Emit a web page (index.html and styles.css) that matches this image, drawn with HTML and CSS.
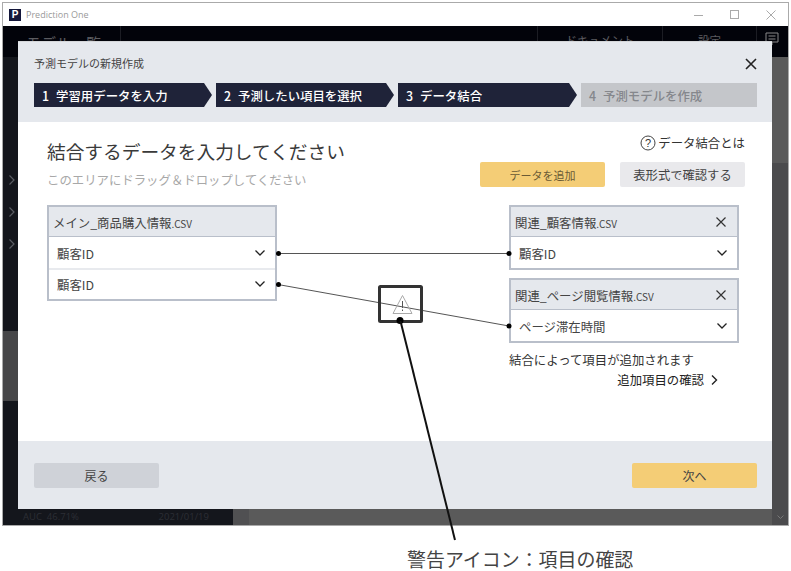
FILE: index.html
```html
<!DOCTYPE html>
<html lang="ja">
<head>
    <meta charset="UTF-8">
    <title>Prediction One</title>
    <link rel="stylesheet" href="styles.css">
</head>
<body>
    <div class="app-window">
        <div class="title-bar">
            <div class="app-logo">P</div>
            <span class="app-name">Prediction One</span>
            <div class="win-controls">
                <svg width="12" height="12" viewBox="0 0 12 12"><path d="M1 6.5H10" stroke="#aaa" fill="none"/></svg>
                <svg width="12" height="12" viewBox="0 0 12 12"><rect x="1.5" y="1.5" width="8" height="8" stroke="#aaa" fill="none"/></svg>
                <svg width="12" height="12" viewBox="0 0 12 12"><path d="M1.5 1.5L10.5 10.5M10.5 1.5L1.5 10.5" stroke="#aaa" fill="none"/></svg>
            </div>
        </div>
        <div class="app-nav">
            <div class="nav-models">モデル一覧</div>
            <div class="nav-spacer"></div>
            <div class="nav-item nav-doc">ドキュメント</div>
            <div class="nav-item nav-settings">設定</div>
            <div class="nav-item nav-feedback">
                <svg width="14" height="14" viewBox="0 0 14 14"><path d="M1 1H13V10H7V13L4 10H1Z M3.5 4H10.5 M3.5 7H10.5" stroke="#888" fill="none"/></svg>
            </div>
        </div>
        <div class="app-body">
            <div class="sidebar">
                <div class="side-top"></div>
                <div class="side-chevrons">
                    <svg width="6" height="10" viewBox="0 0 6 10"><path d="M0.5 0.5L5 5L0.5 9.5" stroke="#5a5c63" stroke-width="1.2" fill="none"/></svg>
                    <svg width="6" height="10" viewBox="0 0 6 10"><path d="M0.5 0.5L5 5L0.5 9.5" stroke="#5a5c63" stroke-width="1.2" fill="none"/></svg>
                    <svg width="6" height="10" viewBox="0 0 6 10"><path d="M0.5 0.5L5 5L0.5 9.5" stroke="#5a5c63" stroke-width="1.2" fill="none"/></svg>
                </div>
                <div class="side-selected"></div>
                <div class="side-bottom">
                    <span>AUC&nbsp; 46.71%</span>
                    <span>2021/01/19</span>
                </div>
            </div>
            <div class="main-area">
                <div class="main-gutter"></div>
                <div class="main-fill"></div>
                <div class="scrollbar">
                    <svg width="7" height="4" viewBox="0 0 7 4"><path d="M0.5 0.5L3.5 3.500L6.500 0.5" stroke="#777" fill="none"/></svg>
                </div>
            </div>
        </div>

        <div class="modal">
            <div class="modal-header">
                <div class="modal-title-row">
                    <span class="modal-title">予測モデルの新規作成</span>
                    <svg class="modal-close" width="12" height="12" viewBox="0 0 12 12"><path d="M1 1L11 11M11 1L1 11" stroke="#222" stroke-width="1.6" fill="none"/></svg>
                </div>
                <div class="steps">
                    <div class="step"><b>1</b>学習用データを入力</div>
                    <div class="step"><b>2</b>予測したい項目を選択</div>
                    <div class="step step-wide"><b>3</b>データ結合</div>
                    <div class="step step-off"><b>4</b>予測モデルを作成</div>
                </div>
            </div>

            <div class="modal-body">
                <div class="intro-row">
                    <div>
                        <h2 class="page-title">結合するデータを入力してください</h2>
                        <p class="page-hint">このエリアにドラッグ＆ドロップしてください</p>
                    </div>
                    <div class="intro-actions">
                        <div class="help-link">
                            <svg width="16" height="16" viewBox="0 0 16 16"><circle cx="8" cy="8" r="7" stroke="#444" fill="none"/><text x="8" y="12" text-anchor="middle" class="help-mark">?</text></svg>
                            データ結合とは
                        </div>
                        <div class="action-btns">
                            <button class="btn btn-yellow btn-add">データを追加</button>
                            <button class="btn btn-light">表形式で確認する</button>
                        </div>
                    </div>
                </div>

                <div class="join-row">
                    <div class="data-card">
                        <div class="card-head"><span>メイン_商品購入情報<span class="file-ext">.CSV</span></span></div>
                        <div class="card-row">顧客ID<svg class="chev" width="10" height="6" viewBox="0 0 10 6"><path d="M0.5 0.5L5 5L9.5 0.5" stroke="#222" stroke-width="1.3" fill="none"/></svg></div>
                        <div class="card-row card-row-split">顧客ID<svg class="chev" width="10" height="6" viewBox="0 0 10 6"><path d="M0.5 0.5L5 5L9.5 0.5" stroke="#222" stroke-width="1.3" fill="none"/></svg></div>
                    </div>
                    <div class="right-col">
                        <div class="data-card">
                            <div class="card-head"><span>関連_顧客情報<span class="file-ext">.CSV</span></span><svg class="card-x" width="10" height="10" viewBox="0 0 10 10"><path d="M0.5 0.5L9.5 9.5M9.5 0.5L0.5 9.5" stroke="#333" stroke-width="1.2" fill="none"/></svg></div>
                            <div class="card-row">顧客ID<svg class="chev" width="10" height="6" viewBox="0 0 10 6"><path d="M0.5 0.5L5 5L9.5 0.5" stroke="#222" stroke-width="1.3" fill="none"/></svg></div>
                        </div>
                        <div class="data-card">
                            <div class="card-head"><span>関連_ページ閲覧情報<span class="file-ext">.CSV</span></span><svg class="card-x" width="10" height="10" viewBox="0 0 10 10"><path d="M0.5 0.5L9.5 9.5M9.5 0.5L0.5 9.5" stroke="#333" stroke-width="1.2" fill="none"/></svg></div>
                            <div class="card-row">ページ滞在時間<svg class="chev" width="10" height="6" viewBox="0 0 10 6"><path d="M0.5 0.5L5 5L9.5 0.5" stroke="#222" stroke-width="1.3" fill="none"/></svg></div>
                        </div>
                        <div class="join-note">結合によって項目が追加されます</div>
                        <div class="join-link">追加項目の確認<svg width="7" height="10" viewBox="0 0 7 10"><path d="M1 0.5L5.5 5L1 9.5" stroke="#222" stroke-width="1.4" fill="none"/></svg></div>
                    </div>
                </div>
            </div>

            <div class="modal-footer">
                <button class="btn btn-back">戻る</button>
                <button class="btn btn-yellow btn-next">次へ</button>
            </div>
        </div>
    </div>

    <!-- connectors and the callout drawn over the screenshot -->
    <svg class="overlay" width="791" height="571" viewBox="0 0 791 571">
        <path d="M278 253.500H509" stroke="#555" fill="none"/>
        <path d="M278 284.500L509 326" stroke="#555" fill="none"/>
        <circle cx="278.500" cy="253.500" r="2.500"/>
        <circle cx="278.500" cy="284.500" r="2.500"/>
        <circle cx="509" cy="253.500" r="2.500"/>
        <circle cx="509" cy="326" r="2.500"/>
        <path d="M402.500 295.500L412 313.500H393Z" stroke="#aaa" fill="none"/>
        <path d="M402.500 301V308M402.500 309.500V311" stroke="#555" fill="none"/>
        <rect x="379.500" y="286.500" width="42" height="35" rx="1" stroke="#333" stroke-width="3" fill="none"/>
        <circle cx="400" cy="320.500" r="3.500"/>
        <path d="M400.500 321L455 540" stroke="#111" stroke-width="2" fill="none"/>
    </svg>
    <div class="callout">警告アイコン：項目の確認</div>
</body>
</html>
```

FILE: styles.css
```css
* {
    box-sizing: border-box;
}
body {
    margin: 0;
    width: 791px;
    height: 571px;
    position: relative;
    overflow: hidden;
    background-color: #fff;
    font-family: "Noto Sans CJK JP", "Noto Sans", sans-serif;
    color: #333;
}
.app-window {
    position: relative;
    margin: 2px 0 0 2px;
    width: 787px;
    height: 524px;
    border: 1px solid #aaa;
    display: flex;
    flex-direction: column;
    overflow: hidden;
}
.title-bar {
    height: 23px;
    flex: none;
    background-color: #fff;
    display: flex;
    align-items: center;
    padding-left: 6px;
}
.app-logo {
    width: 12px;
    height: 12px;
    background-color: #13163a;
    color: #fff;
    font-family: "Liberation Sans", sans-serif;
    font-size: 10px;
    font-weight: bold;
    line-height: 12px;
    text-align: center;
}
.app-name {
    margin-left: 5px;
    font-family: "Open Sans", sans-serif;
    font-size: 9px;
    color: #9a9a9a;
}
.win-controls {
    margin-left: auto;
    margin-right: 11px;
    display: flex;
    gap: 24px;
}
.app-nav {
    height: 31px;
    flex: none;
    background-color: #02030a;
    display: flex;
    padding-right: 1px;
    color: #5c5c60;
    font-size: 11.500px;
}
.nav-models {
    width: 118px;
    padding: 6px 0 0 23px;
    border-right: 1px solid #1c1d24;
    font-size: 15px;
}
.nav-spacer {
    flex: 1;
}
.nav-item {
    text-align: center;
    padding-top: 6px;
    border-left: 1px solid #1c1d24;
}
.nav-doc {
    width: 125px;
}
.nav-settings {
    width: 94px;
}
.nav-feedback {
    width: 31px;
}
.app-body {
    flex: 1;
    display: flex;
    min-height: 0;
}
.sidebar {
    width: 230px;
    flex: none;
    background-color: #14161c;
    display: flex;
    flex-direction: column;
    color: #2c2e35;
    font-size: 9.500px;
}
.side-top {
    height: 118px;
    flex: none;
}
.side-chevrons {
    height: 156px;
    flex: none;
    display: flex;
    flex-direction: column;
    gap: 22px;
    padding-left: 6px;
}
.side-selected {
    height: 70px;
    flex: none;
    background-color: #464648;
}
.side-bottom {
    margin-top: auto;
    height: 20px;
    display: flex;
    justify-content: space-between;
    padding: 5px 24px 0 20px;
    font-family: "Open Sans", sans-serif;
}
.main-area {
    flex: 1;
    display: flex;
    background-color: #5a5a5a;
}
.main-gutter {
    width: 16px;
    background-color: #505052;
}
.main-fill {
    flex: 1;
}
.scrollbar {
    width: 16px;
    margin-top: 106px;
    background-color: #4b4b4d;
    display: flex;
    align-items: flex-end;
    justify-content: center;
    padding-bottom: 6px;
}
.modal {
    position: absolute;
    left: 15px;
    top: 38px;
    width: 754px;
    height: 468px;
    background-color: #fff;
    border-top: 1px solid #d5d7da;
    display: flex;
    flex-direction: column;
}
.modal-header {
    height: 80px;
    flex: none;
    background-color: #e5e8ed;
    padding: 13px 15px 0 16px;
}
.modal-title-row {
    height: 16px;
    display: flex;
    justify-content: space-between;
    align-items: center;
    font-size: 11px;
    color: #444;
}
.modal-close {
    margin-top: 2px;
}
.steps {
    display: flex;
    gap: 4px;
    margin-top: 12px;
}
.step {
    width: 178px;
    height: 24px;
    padding-left: 8px;
    background-color: #1f2339;
    color: #fff;
    font-size: 12.400px;
    font-weight: 500;
    line-height: 26px;
    white-space: nowrap;
    clip-path: polygon(0 0, calc(100% - 8px) 0, 100% 50%, calc(100% - 8px) 100%, 0 100%);
}
.step b {
    font-weight: 500;
    margin-right: 7px;
}
.step-wide {
    width: 179px;
}
.step-off {
    width: 176px;
    background-color: #c4c6ca;
    color: #85878c;
    clip-path: none;
}
.modal-body {
    flex: 1;
    padding: 0 33px 0 29px;
}
.intro-row {
    display: flex;
    justify-content: space-between;
    height: 83px;
}
.page-title {
    margin: 16px 0 0;
    font-size: 18.700px;
    font-weight: 400;
    line-height: 26px;
    color: #3a3a3a;
}
.page-hint {
    margin: 7px 0 0;
    font-size: 12.400px;
    line-height: 18px;
    color: #a8a8a8;
}
.intro-actions {
    display: flex;
    flex-direction: column;
    align-items: flex-end;
    padding-top: 12px;
    margin-right: -6px;
}
.help-link {
    display: flex;
    align-items: center;
    gap: 2px;
    height: 17px;
    font-size: 12.400px;
    color: #333;
}
.help-mark {
    font-family: "Liberation Sans", sans-serif;
    font-size: 11px;
    fill: #333;
}
.action-btns {
    display: flex;
    gap: 15px;
    margin-top: 11px;
}
.btn {
    border: none;
    border-radius: 2px;
    font-family: inherit;
    color: #444;
    padding: 0;
}
.btn-yellow {
    background-color: #f4cd76;
}
.btn-add {
    width: 125px;
    height: 25px;
    font-size: 11px;
    color: #6a5a35;
}
.btn-light {
    width: 125px;
    height: 25px;
    background-color: #e9e9ec;
    font-size: 12.300px;
}
.join-row {
    display: flex;
    justify-content: space-between;
    align-items: flex-start;
}
.right-col {
    display: flex;
    flex-direction: column;
    gap: 8px;
    width: 230px;
}
.data-card {
    width: 230px;
    border: 2px solid #b9bfca;
    background-color: #fff;
    font-size: 12.400px;
}
.card-head {
    height: 30px;
    background-color: #e5e8ed;
    border-bottom: 1px solid #b9bfca;
    padding: 2px 10px 0 4px;
    display: flex;
    align-items: center;
    justify-content: space-between;
    color: #444;
}
.file-ext {
    font-size: 10px;
}
.card-x {
    margin: -2px 1px 0 0;
}
.card-row {
    height: 31px;
    padding: 2px 10px 0 8px;
    display: flex;
    align-items: center;
    justify-content: space-between;
    color: #444;
}
.chev {
    margin-top: -2px;
}
.card-row-split {
    padding-top: 0;
    border-top: 2px solid #e8eaee;
}
.join-note {
    margin-top: 0;
    font-size: 12.400px;
    line-height: 18px;
    color: #333;
}
.join-link {
    margin-top: -6px;
    padding-right: 21px;
    display: flex;
    justify-content: flex-end;
    align-items: center;
    gap: 7px;
    font-size: 12.400px;
    line-height: 18px;
    color: #222;
}
.modal-footer {
    height: 68px;
    flex: none;
    background-color: #e5e8ed;
    display: flex;
    justify-content: space-between;
    align-items: flex-start;
    padding: 22px 15px 0 16px;
}
.btn-back, .btn-next {
    width: 125px;
    height: 25px;
    font-size: 12px;
}
.btn-back {
    background-color: #cfd2d8;
}
.overlay {
    position: absolute;
    left: 0;
    top: 0;
}
.callout {
    position: absolute;
    left: 407px;
    top: 545px;
    font-size: 18.950px;
    line-height: 28px;
    color: #444;
    white-space: nowrap;
}
```
